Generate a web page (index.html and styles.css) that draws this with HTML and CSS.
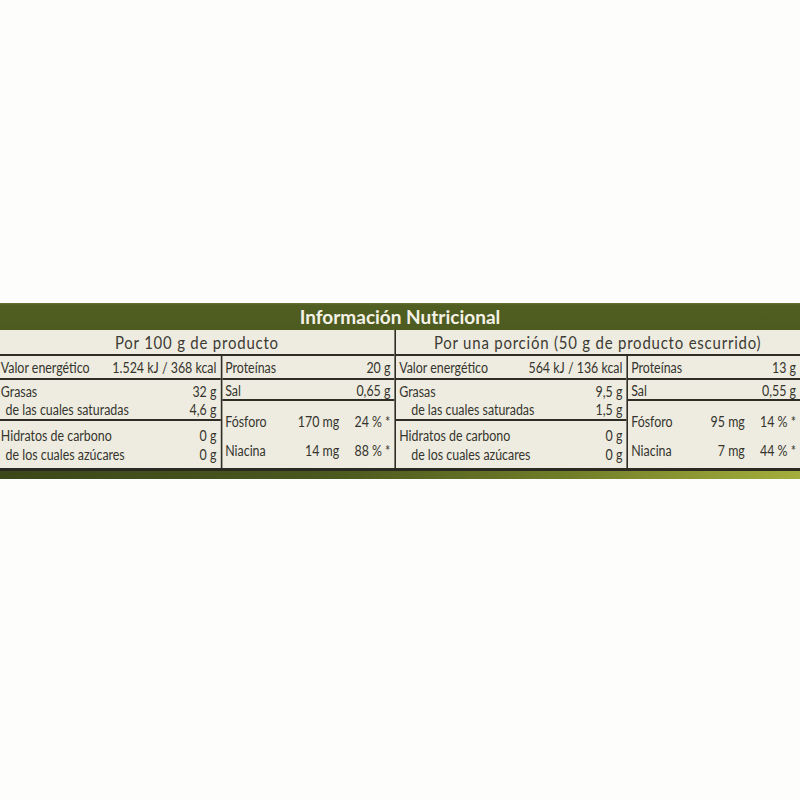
FILE: index.html
```html
<!DOCTYPE html>
<html lang="es">
<head>
<meta charset="utf-8">
<title>Información Nutricional</title>
<link rel="stylesheet" href="styles.css">
</head>
<body>
<div class="page">
  <div class="top"></div>
  <section class="label">
    <div class="title">Información Nutricional</div>
    <div class="table">
      <div class="half left">
        <div class="sub"><span>Por 100 g de producto</span></div>
        <div class="cols">
          <div class="col a">
            <div class="cell r1"><span>Valor energético</span><span>1.524 kJ / 368 kcal</span></div>
            <div class="cell r2">
              <div class="line"><span>Grasas</span><span>32 g</span></div>
              <div class="line ind"><span>de las cuales saturadas</span><span>4,6 g</span></div>
            </div>
            <div class="cell r3">
              <div class="line"><span>Hidratos de carbono</span><span>0 g</span></div>
              <div class="line ind"><span>de los cuales azúcares</span><span>0 g</span></div>
            </div>
          </div>
          <div class="col b">
            <div class="cell r1"><span>Proteínas</span><span>20 g</span></div>
            <div class="cell rs"><span>Sal</span><span>0,65 g</span></div>
            <div class="cell rm">
              <div class="mline"><span>Fósforo</span><span class="amt">170 mg</span><span class="pct">24 % *</span></div>
              <div class="mline"><span>Niacina</span><span class="amt">14 mg</span><span class="pct">88 % *</span></div>
            </div>
          </div>
        </div>
      </div>
      <div class="half right">
        <div class="sub"><span>Por una porción (50 g de producto escurrido)</span></div>
        <div class="cols">
          <div class="col a">
            <div class="cell r1"><span>Valor energético</span><span>564 kJ / 136 kcal</span></div>
            <div class="cell r2">
              <div class="line"><span>Grasas</span><span>9,5 g</span></div>
              <div class="line ind"><span>de las cuales saturadas</span><span>1,5 g</span></div>
            </div>
            <div class="cell r3">
              <div class="line"><span>Hidratos de carbono</span><span>0 g</span></div>
              <div class="line ind"><span>de los cuales azúcares</span><span>0 g</span></div>
            </div>
          </div>
          <div class="col b">
            <div class="cell r1"><span>Proteínas</span><span>13 g</span></div>
            <div class="cell rs"><span>Sal</span><span>0,55 g</span></div>
            <div class="cell rm">
              <div class="mline"><span>Fósforo</span><span class="amt">95 mg</span><span class="pct">14 % *</span></div>
              <div class="mline"><span>Niacina</span><span class="amt">7 mg</span><span class="pct">44 % *</span></div>
            </div>
          </div>
        </div>
      </div>
    </div>
    <div class="strip"></div>
  </section>
</div>
</body>
</html>
```
FILE: styles.css
```css
* { box-sizing: border-box; }
html, body { margin: 0; padding: 0; background: #fdfdfb; }
body {
  font-family: "Lato", "Open Sans", sans-serif;
  color: #35342e;
  width: 800px;
  height: 800px;
  overflow: hidden;
}
.top { height: 303px; }
.label { width: 800px; }
.title {
  height: 27px;
  background: linear-gradient(180deg, #6a7432 0, #515e22 2px, #4e5b20 100%);
  color: #f4f2e6;
  font-weight: 700;
  font-size: 19px;
  line-height: 28px;
  text-align: center;
}
/* the printed label uses a condensed face: the table is drawn wide and squeezed */
.table {
  display: flex;
  width: 1000px;
  transform: scaleX(0.8);
  transform-origin: left top;
  background: #eeece0;
  border-bottom: 3px solid #2a2a22;
}
.half { display: flex; flex-direction: column; }
.half.left { width: 495px; border-right: 2.5px solid #2e2e27; }
.half.right { width: 505px; }
.sub {
  height: 26px;
  border-bottom: 2px solid #2e2e27;
  text-align: center;
  font-size: 17px;
  line-height: 25px;
  letter-spacing: 0.9px;
  color: #3b3a34;
  white-space: nowrap;
}
.sub span {
  display: inline-block;
  transform: scaleX(1.1);
}
.cols { display: flex; }
.col { display: flex; flex-direction: column; }
.left .a { width: 277.5px; border-right: 2.5px solid #2e2e27; }
.left .b { flex: 1; }
.right .a { width: 290px; border-right: 2.5px solid #2e2e27; }
.right .b { flex: 1; }
.cell {
  font-size: 15.5px;
  padding: 0 5px 0 4px;
  white-space: nowrap;
}
.left .a .cell { padding-left: 1px; }
.cell.r1 {
  height: 24px;
  display: flex;
  justify-content: space-between;
  align-items: center;
  border-bottom: 2px solid #2e2e27;
}
.cell.r2 {
  height: 41px;
  padding-top: 2px;
  border-bottom: 2px solid #2e2e27;
}
.cell.r3 { height: 46px; padding-top: 5px; }
.line {
  display: flex;
  justify-content: space-between;
  line-height: 18px;
}
.r3 .line { line-height: 19px; }
.left .line.ind span:first-child { padding-left: 6px; }
.right .line.ind span:first-child { padding-left: 15px; }
.cell.rs {
  height: 21px;
  display: flex;
  justify-content: space-between;
  align-items: center;
  border-bottom: 2px solid #2e2e27;
}
.cell.rm { height: 67px; padding-top: 6px; }
.mline {
  display: grid;
  grid-template-columns: 1fr auto 64px;
  line-height: 29px;
}
.amt { text-align: right; }
.pct { text-align: right; }
.strip {
  height: 8px;
  background: linear-gradient(90deg, #3c4719 0%, #4a571e 40%, #6f7c27 70%, #a4ae3c 100%);
}
```
